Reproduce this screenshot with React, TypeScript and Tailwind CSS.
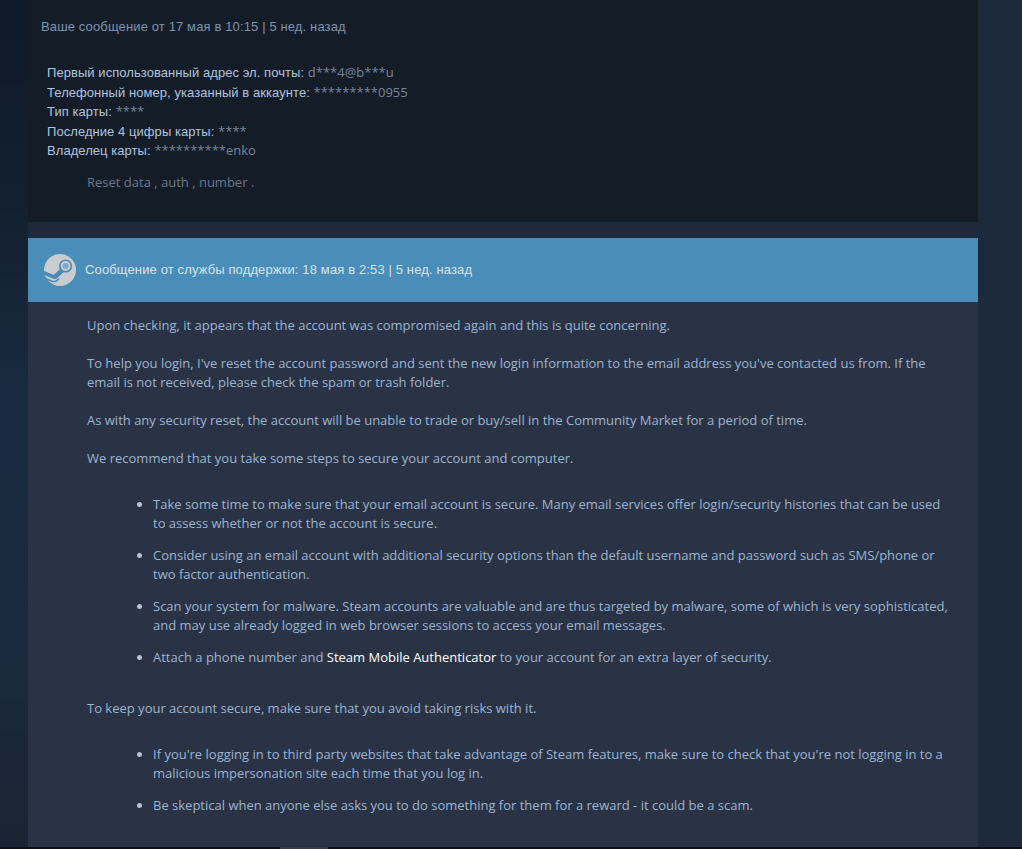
const bodyFont = "font-['Open_Sans',sans-serif]";

function SteamLogo() {
  return (
    <svg width="32" height="32" viewBox="0 0 32 32" className="shrink-0">
      <circle cx="16" cy="16" r="16" fill="#c9cdd0" />
      <g fill="none" stroke="#4a8db8" strokeLinecap="round">
        <path d="M-1 18.6 L10 23" strokeWidth="3.6" />
        <path d="M11.5 22.5 L19 15.5" strokeWidth="4.6" />
        <path d="M1.5 24.6 L8 27.2 Q12 28.4 14.6 25" strokeWidth="1.6" />
      </g>
      <circle cx="21.6" cy="12" r="6.6" fill="#4a8db8" />
      <circle cx="21.6" cy="12" r="4.9" fill="#c9cdd0" />
      <circle cx="21.6" cy="12" r="3" fill="#7fa9c6" />
    </svg>
  );
}

function InfoRow({ label, value }: { label: string; value: string }) {
  return (
    <div className="h-[19.5px] leading-[19.5px]">
      <span className="tracking-[0.06px] text-[#afc4df]">{label}: </span>
      <span className={`text-[#74869b] ${bodyFont}`}>{value}</span>
    </div>
  );
}

export default function App() {
  return (
    <div className="relative flex h-[849px] overflow-hidden bg-[#1c2a3c] font-['Liberation_Sans',sans-serif]">
      <div className="h-full w-[28px] shrink-0 bg-[linear-gradient(180deg,#0f1a2a_0px,#12202f_200px,#1a2a40_400px,#1b2a3e_650px,#1a2433_849px)]" />
      <div className="w-[950px] shrink-0">
        {/* User message */}
        <div className="h-[222px] bg-[#141c28] pt-[18px]">
          <div className="pl-[13px] text-[13px] leading-[18px] tracking-[0.13px] text-[#7c93ae]">
            Ваше сообщение от 17 мая в 10:15 | 5 нед. назад
          </div>
          <div className="mt-[27px] pl-[19px] text-[13px]">
            <InfoRow label="Первый использованный адрес эл. почты" value="d***4@b***u" />
            <InfoRow label="Телефонный номер, указанный в аккаунте" value="*********0955" />
            <InfoRow label="Тип карты" value="****" />
            <InfoRow label="Последние 4 цифры карты" value="****" />
            <InfoRow label="Владелец карты" value="**********enko" />
          </div>
          <div className={`mt-[12px] pl-[59px] text-[13px] leading-[19px] text-[#6b7889] ${bodyFont}`}>
            Reset data , auth , number .
          </div>
        </div>

        {/* Support reply */}
        <div className="h-[627px] bg-[#293345] pt-[16px] [background-image:linear-gradient(180deg,#1e2a3b_0px,#1e2a3b_16px,#293345_16px)]">
          <div className="flex h-[64px] items-center gap-[10px] bg-[#4a8db8] pl-[16px]">
            <SteamLogo />
            <div className="-ml-px text-[13px] tracking-[0.13px] text-[#d5e4ef]">
              Сообщение от службы поддержки: 18 мая в 2:53 | 5 нед. назад
            </div>
          </div>
          <div className={`pl-[59px] pr-[26px] pt-[14px] text-[13px] leading-[19px] text-[#9db3d0] ${bodyFont}`}>
            <p>Upon checking, it appears that the account was compromised again and this is quite concerning.</p>
            <p className="mt-[19px]">
              To help you login, I've reset the account password and sent the new login information to the email address you've contacted us from. If the email is not received, please check the spam or trash folder.
            </p>
            <p className="mt-[19px]">
              As with any security reset, the account will be unable to trade or buy/sell in the Community Market for a period of time.
            </p>
            <p className="mt-[19px]">We recommend that you take some steps to secure your account and computer.</p>
            <ul className="mt-[27px] list-disc pl-[66px] marker:text-[#b4c3d2]">
              <li>Take some time to make sure that your email account is secure. Many email services offer login/security histories that can be used to assess whether or not the account is secure.</li>
              <li className="mt-[13px]">Consider using an email account with additional security options than the default username and password such as SMS/phone or two factor authentication.</li>
              <li className="mt-[13px]">Scan your system for malware. Steam accounts are valuable and are thus targeted by malware, some of which is very sophisticated, and may use already logged in web browser sessions to access your email messages.</li>
              <li className="mt-[13px]">
                Attach a phone number and <span className="text-white">Steam Mobile Authenticator</span> to your account for an extra layer of security.
              </li>
            </ul>
            <p className="mt-[32px]">To keep your account secure, make sure that you avoid taking risks with it.</p>
            <ul className="mt-[27px] list-disc pl-[66px] marker:text-[#b4c3d2]">
              <li>If you're logging in to third party websites that take advantage of Steam features, make sure to check that you're not logging in to a malicious impersonation site each time that you log in.</li>
              <li className="mt-[13px]">Be skeptical when anyone else asks you to do something for them for a reward - it could be a scam.</li>
            </ul>
          </div>
        </div>
      </div>
      {/* bottom edge of the window */}
      <div className="absolute inset-x-0 bottom-0 h-[2px] bg-[#0c0f14]">
        <div className="ml-[280px] h-full w-[48px] bg-[#3a3d42]" />
      </div>
    </div>
  );
}
